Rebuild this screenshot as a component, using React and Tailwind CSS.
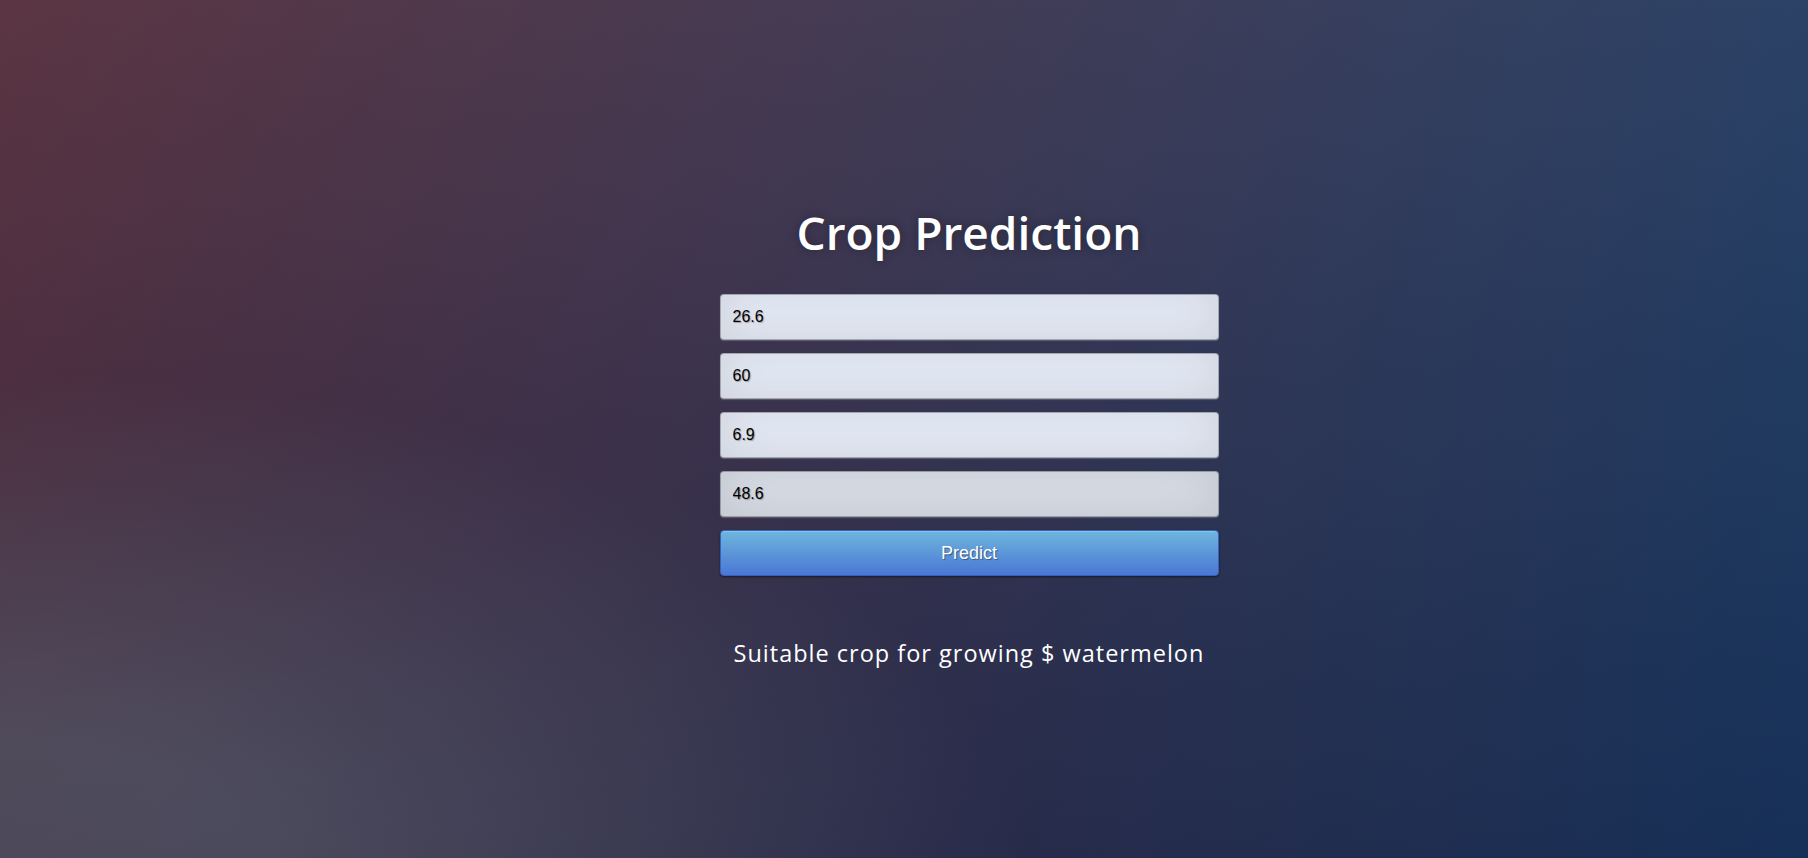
import React from 'react';

const fields = [
  { name: 'temperature', value: '26.6', bg: 'bg-[#e8eefa]' },
  { name: 'humidity', value: '60', bg: 'bg-[#e8eefa]' },
  { name: 'ph', value: '6.9', bg: 'bg-[#e8eefa]' },
  { name: 'rainfall', value: '48.6', bg: 'bg-[#dadfe9]' },
];

export default function App() {
  return (
    <div className="min-h-screen w-full bg-[#092756] bg-[radial-gradient(ellipse_farthest-corner_at_0%_100%,rgba(104,128,138,.4)_10%,rgba(138,114,76,0)_40%),linear-gradient(to_bottom,rgba(57,173,219,.25)_0%,rgba(42,60,87,.4)_100%),linear-gradient(135deg,#670d10_0%,#092756_100%)] font-['Open_Sans',sans-serif]">
      <div className="flex flex-col items-center pl-[130px] pt-[209px]">
        <div className="w-[499px] flex flex-col items-center">
          {/* Title */}
          <h1 className="h-[46px] text-[46px] leading-[46px] font-semibold text-white [text-shadow:0_0_10px_rgba(0,0,0,0.3)]">
            Crop Prediction
          </h1>

          {/* Form */}
          <form className="mt-[39px] w-full flex flex-col gap-[13px]" onSubmit={e => e.preventDefault()}>
            {fields.map(field => (
              <input
                key={field.name}
                name={field.name}
                defaultValue={field.value}
                className={`${field.bg} h-[46px] w-full rounded-[4px] border border-[rgba(0,0,0,0.3)] pl-[12px] text-[16px] text-black font-['Liberation_Sans',Arial,sans-serif] outline-none [text-shadow:1px_1px_1px_rgba(0,0,0,0.3)] shadow-[inset_0_-5px_45px_rgba(100,100,100,0.2),0_1px_1px_rgba(255,255,255,0.2)]`}
              />
            ))}
            <button
              type="submit"
              className="h-[46px] w-full rounded-[4px] border border-[#3762bc] bg-[linear-gradient(to_bottom,#6eb6de,#4a77d4)] text-[18px] text-white font-['Liberation_Sans',Arial,sans-serif] [text-shadow:1px_1px_1px_rgba(0,0,0,0.4)] shadow-[inset_0_1px_0_rgba(255,255,255,0.2),0_1px_2px_rgba(0,0,0,0.5)]"
            >
              Predict
            </button>
          </form>

          {/* Result */}
          <p className="mt-[66px] text-[23.5px] leading-[23.5px] text-white tracking-[1px]">
            Suitable crop for growing $ watermelon
          </p>
        </div>
      </div>
    </div>
  );
}
